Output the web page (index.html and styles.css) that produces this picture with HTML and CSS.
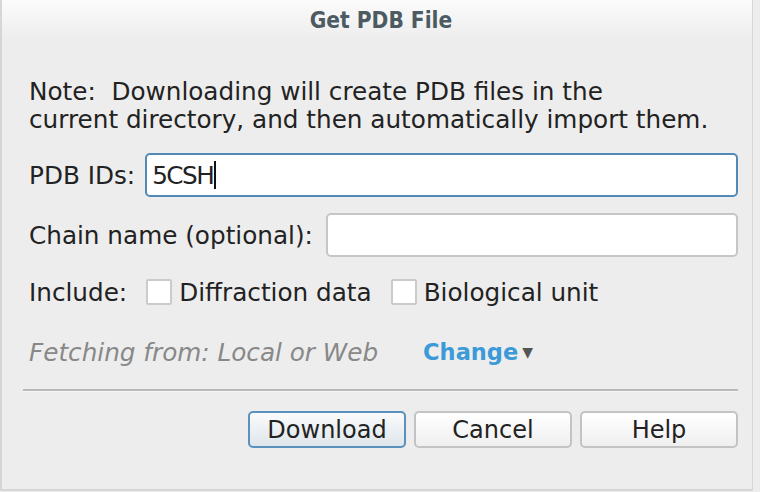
FILE: index.html
```html
<!DOCTYPE html>
<html>
<head>
<meta charset="utf-8">
<link rel="stylesheet" href="styles.css">
</head>
<body>
<div class="dialog">
  <div class="titlebar">Get PDB File</div>
  <div class="content">
    <p class="note">Note:&nbsp; Downloading will create PDB files in the<br>current directory, and then automatically import them.</p>
    <div class="row row-ids">
      <span class="label label-ids">PDB IDs:</span>
      <div class="field field-focus"><span class="value">5CSH</span><span class="caret"></span></div>
    </div>
    <div class="row row-chain">
      <span class="label">Chain name (optional):</span>
      <div class="field"></div>
    </div>
    <div class="row row-include">
      <span class="label label-include">Include:</span>
      <span class="check"></span><span class="check-label">Diffraction data</span>
      <span class="check check-2"></span><span class="check-label">Biological unit</span>
    </div>
    <div class="row row-fetch">
      <span class="fetch">Fetching from: Local or Web</span>
      <span class="change">Change</span><span class="arrow">&#9660;</span>
    </div>
    <div class="separator"></div>
    <div class="buttons">
      <button class="btn btn-default">Download</button>
      <button class="btn">Cancel</button>
      <button class="btn">Help</button>
    </div>
  </div>
</div>
</body>
</html>
```

FILE: styles.css
```css
html, body {
  margin: 0;
  padding: 0;
  background: #ededed;
}
.dialog {
  width: 753px;
  height: 491px;
  box-sizing: border-box;
  border-left: 2px solid #d6d6d6;
  border-right: 1px solid #d6d6d6;
  border-bottom: 2px solid #d6d6d6;
  background: #ededed;
  font-family: "DejaVu Sans", sans-serif;
  font-size: 24.7px;
  color: #222;
}
.titlebar {
  height: 40px;
  background: linear-gradient(#fbfbfb, #ededed);
  display: flex;
  align-items: center;
  justify-content: center;
  padding-left: 8px;
  font-family: "DejaVu Sans Condensed", "DejaVu Sans", sans-serif;
  font-stretch: condensed;
  font-weight: bold;
  font-size: 22.5px;
  color: #4c5b62;
}
.content {
  padding: 38px 14px 0 27px;
  display: flex;
  flex-direction: column;
}
.note {
  margin: 0;
  line-height: 28px;
}
.row {
  display: flex;
  align-items: center;
}
.row-ids {
  margin-top: 19px;
  height: 44px;
}
.row-chain {
  margin-top: 16px;
  height: 44px;
}
.label {
  margin-right: 13px;
  white-space: nowrap;
}
.label-ids {
  margin-right: 10px;
}
.field {
  flex: 1;
  height: 44px;
  box-sizing: border-box;
  background: #fff;
  border: 2px solid #c6c6c6;
  border-radius: 5px;
  display: flex;
  align-items: center;
  padding-left: 5px;
}
.field-focus {
  border-color: #5289b5;
}
.value {
  letter-spacing: -1.5px;
}
.caret {
  width: 2px;
  height: 28px;
  background: #111;
  margin-left: 1px;
}
.row-include {
  margin-top: 20px;
  height: 30px;
}
.label-include {
  margin-right: 19px;
}
.check {
  width: 26px;
  height: 26px;
  box-sizing: border-box;
  background: #fff;
  border: 2px solid #cbcbcb;
  border-radius: 2px;
  margin-right: 7px;
}
.check-2 {
  margin-left: 19px;
}
.row-fetch {
  margin-top: 30px;
  height: 30px;
}
.fetch {
  font-style: italic;
  color: #888;
}
.change {
  margin-left: 45px;
  font-weight: bold;
  font-size: 22.5px;
  color: #3c9ad8;
}
.arrow {
  font-size: 14px;
  color: #555;
  margin-left: 4px;
}
.separator {
  margin-top: 22px;
  margin-left: -6px;
  height: 2px;
  background: #b9b9b9;
  border-bottom: 1px solid #f6f6f6;
}
.buttons {
  margin-top: 19px;
  display: flex;
  justify-content: flex-end;
  gap: 8px;
}
.btn {
  width: 158px;
  height: 37px;
  box-sizing: border-box;
  border: 2px solid #c3c3c3;
  border-radius: 5px;
  background: linear-gradient(#ffffff, #efefef);
  font-family: "DejaVu Sans", sans-serif;
  font-size: 24px;
  color: #222;
  padding: 0;
}
.btn-default {
  border-color: #5b91bd;
  background: linear-gradient(#fafbfc, #dfe6eb);
}
```
